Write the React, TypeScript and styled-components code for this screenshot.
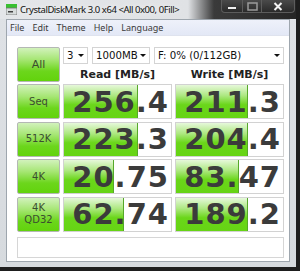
import styled, { createGlobalStyle } from 'styled-components';

const GlobalStyle = createGlobalStyle`
    html, body {
        margin: 0;
        padding: 0;
        background: #1e1e1e;
        overflow: hidden;
    }
`;

const Window = styled.div`
    width: 296px;
    height: 267px;
    display: flex;
    flex-direction: column;
    background: linear-gradient(#dfe2e6, #d6dade);
    font-family: 'DejaVu Sans', sans-serif;
`;

const TitleBar = styled.div`
    height: 19px;
    display: flex;
    align-items: flex-start;
    background: linear-gradient(to right, #e4e6e9 0, #e0e2e5 188px, #3a3a3a 214px, #262626 100%);
`;

const AppIcon = styled.svg`
    margin: 4px 0 0 6px;
    flex: none;
`;

const Title = styled.span`
    margin: 2px 0 0 3px;
    font-family: 'Noto Sans', sans-serif;
    font-size: 9.5px;
    letter-spacing: -0.45px;
    line-height: 15px;
    color: #111;
    white-space: nowrap;
    text-shadow: 0 0 6px #fff;
`;

const Controls = styled.div`
    margin-left: auto;
    margin-right: 1px;
    display: flex;
    height: 14px;
`;

const CtrlBtn = styled.div<{ $w: number }>`
    width: ${(p) => p.$w}px;
    height: 13px;
    display: flex;
    align-items: center;
    justify-content: center;
    border: 1px solid #5c5c5c;
    border-top: none;
    margin-left: -1px;
    background: linear-gradient(#4a4a4a, #2a2a2a);
    box-sizing: border-box;
    &:last-child {
        border-radius: 0 0 4px 0;
    }
    &:first-child {
        border-radius: 0 0 0 4px;
    }
`;

const Frame = styled.div`
    flex: 1;
    display: flex;
    padding: 0 6px 5px 6px;
`;

const Inner = styled.div`
    flex: 1;
    display: flex;
    flex-direction: column;
    border: 1px solid #9ea6ae;
    background: #fff;
`;

const MenuBar = styled.div`
    height: 15px;
    display: flex;
    gap: 8px;
    padding-left: 3px;
    background: linear-gradient(#eef1fa, #e3e8f6);
    border-bottom: 1px solid #dfe3ee;
`;

const MenuItem = styled.span`
    font-family: 'Noto Sans', sans-serif;
    font-size: 9px;
    line-height: 15px;
    color: #3a3a3a;
`;

const Client = styled.div`
    flex: 1;
    display: grid;
    grid-template-columns: 43px 109px 109px;
    grid-template-rows: 17px 16px repeat(4, 35.5px) 21px;
    column-gap: 3px;
    row-gap: 2px;
    padding: 11px 0 0 10px;
`;

const GreenButton = styled.div<{ $span?: boolean }>`
    grid-row: ${(p) => (p.$span ? '1 / 3' : 'auto')};
    box-sizing: border-box;
    height: 35px;
    border: 1px solid #b4b8b4;
    border-radius: 2px;
    background: linear-gradient(#d2f2bc 0%, #a6e674 35%, #6cd61c 70%, #62d30c 100%);
    display: flex;
    flex-direction: column;
    align-items: center;
    justify-content: center;
    font-size: 10px;
    line-height: 12px;
    color: #3b4d30;
    text-align: center;
`;

const AllLabel = styled.span`
    font-size: 11px;
`;

const Selects = styled.div`
    grid-column: 2 / 4;
    display: flex;
    gap: 4px;
`;

const Select = styled.div<{ $w: number }>`
    width: ${(p) => p.$w}px;
    box-sizing: border-box;
    height: 17px;
    border: 1px solid #d4d4d4;
    display: flex;
    align-items: center;
    justify-content: space-between;
    padding: 0 3px 0 3px;
    font-size: 10.2px;
    color: #111;
    white-space: nowrap;
`;

const Arrow = styled.span`
    width: 0;
    height: 0;
    border-left: 3px solid transparent;
    border-right: 3px solid transparent;
    border-top: 3px solid #111;
`;

const Header = styled.div`
    display: flex;
    align-items: center;
    justify-content: center;
    font-size: 11px;
    font-weight: bold;
    color: #222;
`;

const Row = styled.div`
    display: contents;
`;

const Cell = styled.div`
    position: relative;
    box-sizing: border-box;
    height: 35px;
    border: 1px solid #d2d2d2;
    overflow: hidden;
`;

const Bar = styled.div`
    position: absolute;
    left: 0;
    top: 0;
    bottom: 0;
    border-right: 1px solid #56a82a;
    background: linear-gradient(#e6f8da 0%, #ade881 32%, #6ad61a 60%, #66d414 100%);
`;

const Value = styled.div`
    position: relative;
    height: 100%;
    display: flex;
    align-items: center;
    justify-content: flex-end;
    padding-right: 2px;
    font-size: 29px;
    font-weight: bold;
    color: #3b3b3b;
    letter-spacing: 1px;
`;

const Comment = styled.div`
    grid-column: 1 / 4;
    margin-top: 3px;
    height: 21px;
    box-sizing: border-box;
    border: 1px solid #d6d6d6;
`;

const rows = [
    { label: ['Seq'], read: '256.4', write: '211.3', rw: 73, ww: 71 },
    { label: ['512K'], read: '223.3', write: '204.4', rw: 73, ww: 71 },
    { label: ['4K'], read: '20.75', write: '83.47', rw: 49, ww: 62 },
    { label: ['4K', 'QD32'], read: '62.74', write: '189.2', rw: 59, ww: 71 },
];

export default function App() {
    return (
        <>
            <GlobalStyle />
            <Window>
                <TitleBar>
                    <AppIcon width="11" height="11" viewBox="0 0 11 11">
                        <rect x="0" y="0" width="11" height="4" fill="#38c030" />
                        <rect x="0" y="4" width="11" height="7" fill="#d8dcdc" stroke="#707070" strokeWidth="0.8" />
                        <rect x="2" y="7" width="5" height="1.5" fill="#404040" />
                    </AppIcon>
                    <Title>CrystalDiskMark 3.0 x64 &lt;All 0x00, 0Fill&gt;</Title>
                    <Controls>
                        <CtrlBtn $w={22}>
                            <svg width="10" height="10" viewBox="0 0 10 10">
                                <rect x="1" y="6" width="8" height="2" fill="#f0f0f0" />
                            </svg>
                        </CtrlBtn>
                        <CtrlBtn $w={20}>
                            <svg width="11" height="9" viewBox="0 0 11 9">
                                <rect x="1" y="1" width="9" height="7" fill="none" stroke="#9a9a9a" strokeWidth="1.5" />
                            </svg>
                        </CtrlBtn>
                        <CtrlBtn $w={34}>
                            <svg width="10" height="9" viewBox="0 0 10 9">
                                <path d="M1.5 1 L8.5 8 M8.5 1 L1.5 8" stroke="#f2f2f2" strokeWidth="2" />
                            </svg>
                        </CtrlBtn>
                    </Controls>
                </TitleBar>
                <Frame>
                    <Inner>
                        <MenuBar>
                            <MenuItem>File</MenuItem>
                            <MenuItem>Edit</MenuItem>
                            <MenuItem>Theme</MenuItem>
                            <MenuItem>Help</MenuItem>
                            <MenuItem>Language</MenuItem>
                        </MenuBar>
                        <Client>
                            <GreenButton $span>
                                <AllLabel>All</AllLabel>
                            </GreenButton>
                            <Selects>
                                <Select $w={25}>
                                    3<Arrow />
                                </Select>
                                <Select $w={58}>
                                    1000MB<Arrow />
                                </Select>
                                <Select $w={130}>
                                    F: 0% (0/112GB)<Arrow />
                                </Select>
                            </Selects>
                            <Header>Read [MB/s]</Header>
                            <Header>Write [MB/s]</Header>
                            {rows.map((r) => (
                                <Row key={r.read}>
                                    <GreenButton>
                                        {r.label.map((l) => (
                                            <span key={l}>{l}</span>
                                        ))}
                                    </GreenButton>
                                    <Cell>
                                        <Bar style={{ width: r.rw }} />
                                        <Value>{r.read}</Value>
                                    </Cell>
                                    <Cell>
                                        <Bar style={{ width: r.ww }} />
                                        <Value>{r.write}</Value>
                                    </Cell>
                                </Row>
                            ))}
                            <Comment />
                        </Client>
                    </Inner>
                </Frame>
            </Window>
        </>
    );
}
